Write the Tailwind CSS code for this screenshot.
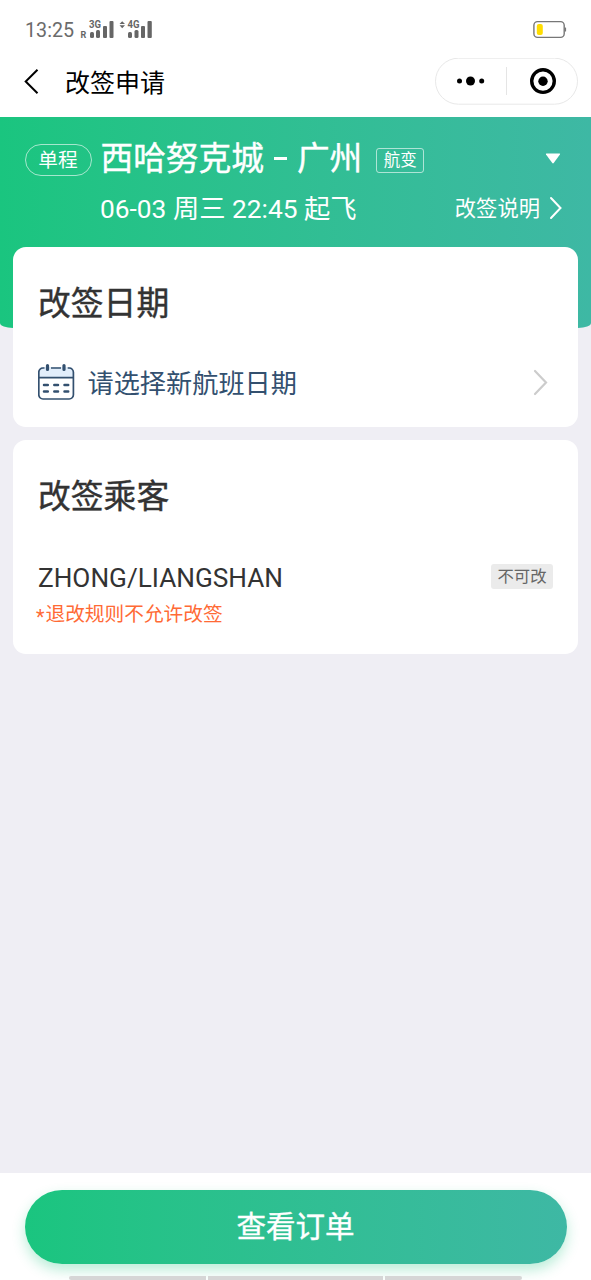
<!DOCTYPE html>
<html lang="zh-CN">
<head>
<meta charset="utf-8">
<title>改签申请</title>
<script src="https://cdn.jsdelivr.net/npm/@tailwindcss/browser@4"></script>
</head>
<body class="flex h-[1280px] w-[591px] flex-col overflow-hidden bg-[#efeef4] font-[Roboto,'Noto_Sans_CJK_SC',sans-serif] text-[#333]">
  <div class="flex h-[58px] shrink-0 items-start justify-between bg-white pt-[18px] pr-[24px] pl-[25px]">
    <div class="flex items-start">
      <span class="w-[55px] text-[19.700px] leading-[26px] text-[#6b6b6b]">13:25</span>
      <svg class="mt-px" width="74" height="22" viewBox="80 19 74 22" fill="#666">
        <g font-family="Roboto" font-weight="700"><text x="80.5" y="38" font-size="9">R</text><text x="89" y="28" font-size="10" textLength="12" lengthAdjust="spacingAndGlyphs">3G</text><text x="127.500" y="28" font-size="10" textLength="12" lengthAdjust="spacingAndGlyphs">4G</text></g>
        <rect x="90" y="32" width="4" height="6" rx="1.5"/><rect x="96" y="30" width="4" height="8" rx="1.500"/><rect x="103" y="26" width="4" height="12" rx="1"/><rect x="109.500" y="21" width="4" height="17" rx="1"/>
        <path d="M119.500 24 122.200 21.200 125 24zM119.500 25.300h5.500l-2.800 2.900z"/>
        <rect x="128" y="32" width="4" height="6" rx="1.500"/><rect x="134.500" y="30" width="4" height="8" rx="1.500"/><rect x="141" y="26" width="4" height="12" rx="1"/><rect x="147.500" y="21" width="4.300" height="17" rx="1"/>
      </svg>
    </div>
    <svg class="mt-[2px]" width="34" height="19" viewBox="533 20 34 19">
      <rect x="533.900" y="21.600" width="30.300" height="15.800" rx="3.600" fill="#fff" stroke="#777" stroke-width="1.400"/>
      <rect x="564.600" y="27.500" width="1.500" height="4" rx=".5" fill="#777"/><rect x="536.800" y="24" width="6" height="11" rx="2" fill="#fd0"/>
    </svg>
  </div>

  <nav class="flex h-[58.600px] shrink-0 justify-between bg-white pr-[13px] pl-[23px]">
    <div class="flex text-black">
      <svg class="mt-[10px]" width="18" height="28" viewBox="0 0 18 28" fill="none" stroke="#000" stroke-width="2"><path d="M14.500 1.800 2.700 13.500 14.500 25.200"/></svg>
      <h1 class="ml-[24px] text-[25px] leading-[51px]">改签申请</h1>
    </div>
    <svg width="143" height="47" viewBox="0 0 143 47">
      <rect x=".5" y=".2" width="142" height="46" rx="23" fill="#fff" stroke="#e8e8e8"/>
      <path d="M71.500 9v28" stroke="#e5e5e5"/>
      <circle cx="24.500" cy="23" r="2.500"/><circle cx="35.500" cy="23" r="4.500"/><circle cx="46.700" cy="23" r="2.500"/>
      <circle cx="108" cy="23.100" r="11.300" fill="none" stroke="#000" stroke-width="3.400"/><circle cx="108" cy="23.200" r="4.700"/>
    </svg>
  </nav>

  <header class="h-[211.400px] shrink-0 bg-linear-to-r from-[#1ac57f] to-[#3eb8a4] [border-radius:0_0_13px_13px/0_0_5px_5px] pr-[27px] pl-[24.500px] text-white">
    <div class="flex h-[66px] items-start pt-[18px]">
      <span class="mt-[9px] flex h-[32px] w-[67px] items-center justify-center rounded-full border border-white/60 pt-[2px] text-[19.700px]">单程</span>
      <h2 class="ml-[9px] text-[32.700px] leading-[48px] whitespace-nowrap [-webkit-text-stroke:0.4px_currentColor]">西哈努克城<span class="mx-[10px] mb-[10px] inline-block h-[3px] w-[13px] bg-white"></span>广州</h2>
      <span class="mt-[13px] ml-[14px] flex h-[25px] w-[48px] items-center justify-center rounded-[3px] border border-white/60 pt-[2px] text-[16.500px]">航变</span>
      <svg class="mt-[17px] mr-[2px] ml-auto" width="18" height="14" viewBox="0 0 18 14" fill="#fff"><path d="M2.500 1.500h13q1 0 .4.900l-6.200 8.700q-.7.800-1.400 0L2 2.400q-.5-.9.500-.9z"/></svg>
    </div>
    <div class="flex h-[52px] items-center justify-between pl-[75.500px]">
      <span class="pt-[2px] text-[26.300px]">06-03 周三 22:45 起飞</span>
      <span class="flex items-center pt-px text-[21.300px]">改签说明
        <svg class="ml-[8px]" width="16" height="26" viewBox="0 0 16 26" fill="none" stroke="#fff" stroke-width="2" stroke-linecap="round"><path d="M3 2 12.500 12 3 22"/></svg>
      </span>
    </div>
  </header>

  <main class="-mt-[81px] flex flex-1 flex-col gap-[13px] px-[13px]">
    <section class="h-[180.500px] rounded-[13px] bg-white px-[25px] pt-[33px]">
      <h2 class="text-[32.800px] leading-[48px] [-webkit-text-stroke:0.4px_currentColor]">改签日期</h2>
      <div class="mt-[34px] flex h-[40px] items-center">
        <svg width="37" height="38" viewBox="0 0 37 38" fill="none">
          <path d="M1 15V8a4 4 0 0 1 4-4h26a4 4 0 0 1 4 4v7z" fill="#e2eefb"/>
          <path d="M6.500 5H5a4.200 4.200 0 0 0-4.200 4.200v22.600A4.200 4.200 0 0 0 5 36h26.200a4.200 4.200 0 0 0 4.200-4.200V9.200A4.200 4.200 0 0 0 31.200 5h-1.500M13 5h10M1 14.600h34.400" stroke="#33506f" stroke-width="1.700"/>
          <path d="M9.500 2.500v4M26 2.500v4" stroke="#33506f" stroke-width="3.200" stroke-linecap="round"/>
          <path d="M6 22h3.800M16.300 22H20M26.500 22h3.700M6 28.500h3.800M16.300 28.500H20M26.500 28.500h3.700" stroke="#33506f" stroke-width="2.500" stroke-linecap="round"/>
        </svg>
        <span class="ml-[12.500px] pt-[5px] text-[26.200px] text-[#33506f]">请选择新航班日期</span>
        <svg class="mt-px mr-[4px] ml-auto" width="17" height="28" viewBox="0 0 17 28" fill="none" stroke="#ccc" stroke-width="2.200" stroke-linecap="round"><path d="M3 3 14 14.500 3 26"/></svg>
      </div>
    </section>

    <section class="h-[213.500px] rounded-[13px] bg-white px-[25px] pt-[33px]">
      <h2 class="text-[32.800px] leading-[48px] [-webkit-text-stroke:0.4px_currentColor]">改签乘客</h2>
      <div class="mt-[37px] flex h-[40px] items-start justify-between">
        <span class="text-[26.200px] leading-[40px]">ZHONG/LIANGSHAN</span>
        <span class="mt-[6px] flex h-[25px] w-[62px] items-center justify-center rounded-[3px] bg-[#ebebeb] text-[16.400px] text-[#666]">不可改</span>
      </div>
      <p class="-ml-[2px] flex pt-[2px] text-[19.700px] leading-[30px] text-[#ff6a35]"><span class="w-[9.500px] pt-[3px]">*</span>退改规则不允许改签</p>
    </section>
  </main>

  <footer class="flex h-[107px] shrink-0 flex-col items-center justify-between overflow-hidden bg-white pt-[17px]">
    <button class="h-[73.500px] w-[542px] rounded-full bg-linear-to-r from-[#1ac57f] to-[#3eb8a4] text-[29.500px] text-white shadow-[0_6px_13px_rgba(26,197,127,0.3)] [-webkit-text-stroke:0.4px_currentColor]">查看订单</button>
    <div class="z-10 flex h-[4px] w-[453px] gap-[2px]"><i class="flex-1 rounded-l-[2px] bg-[#d6d6d6]"></i><i class="w-[175px] bg-[#d6d6d6]"></i><i class="flex-1 rounded-r-[2px] bg-[#d6d6d6]"></i></div>
  </footer>
</body>
</html>
